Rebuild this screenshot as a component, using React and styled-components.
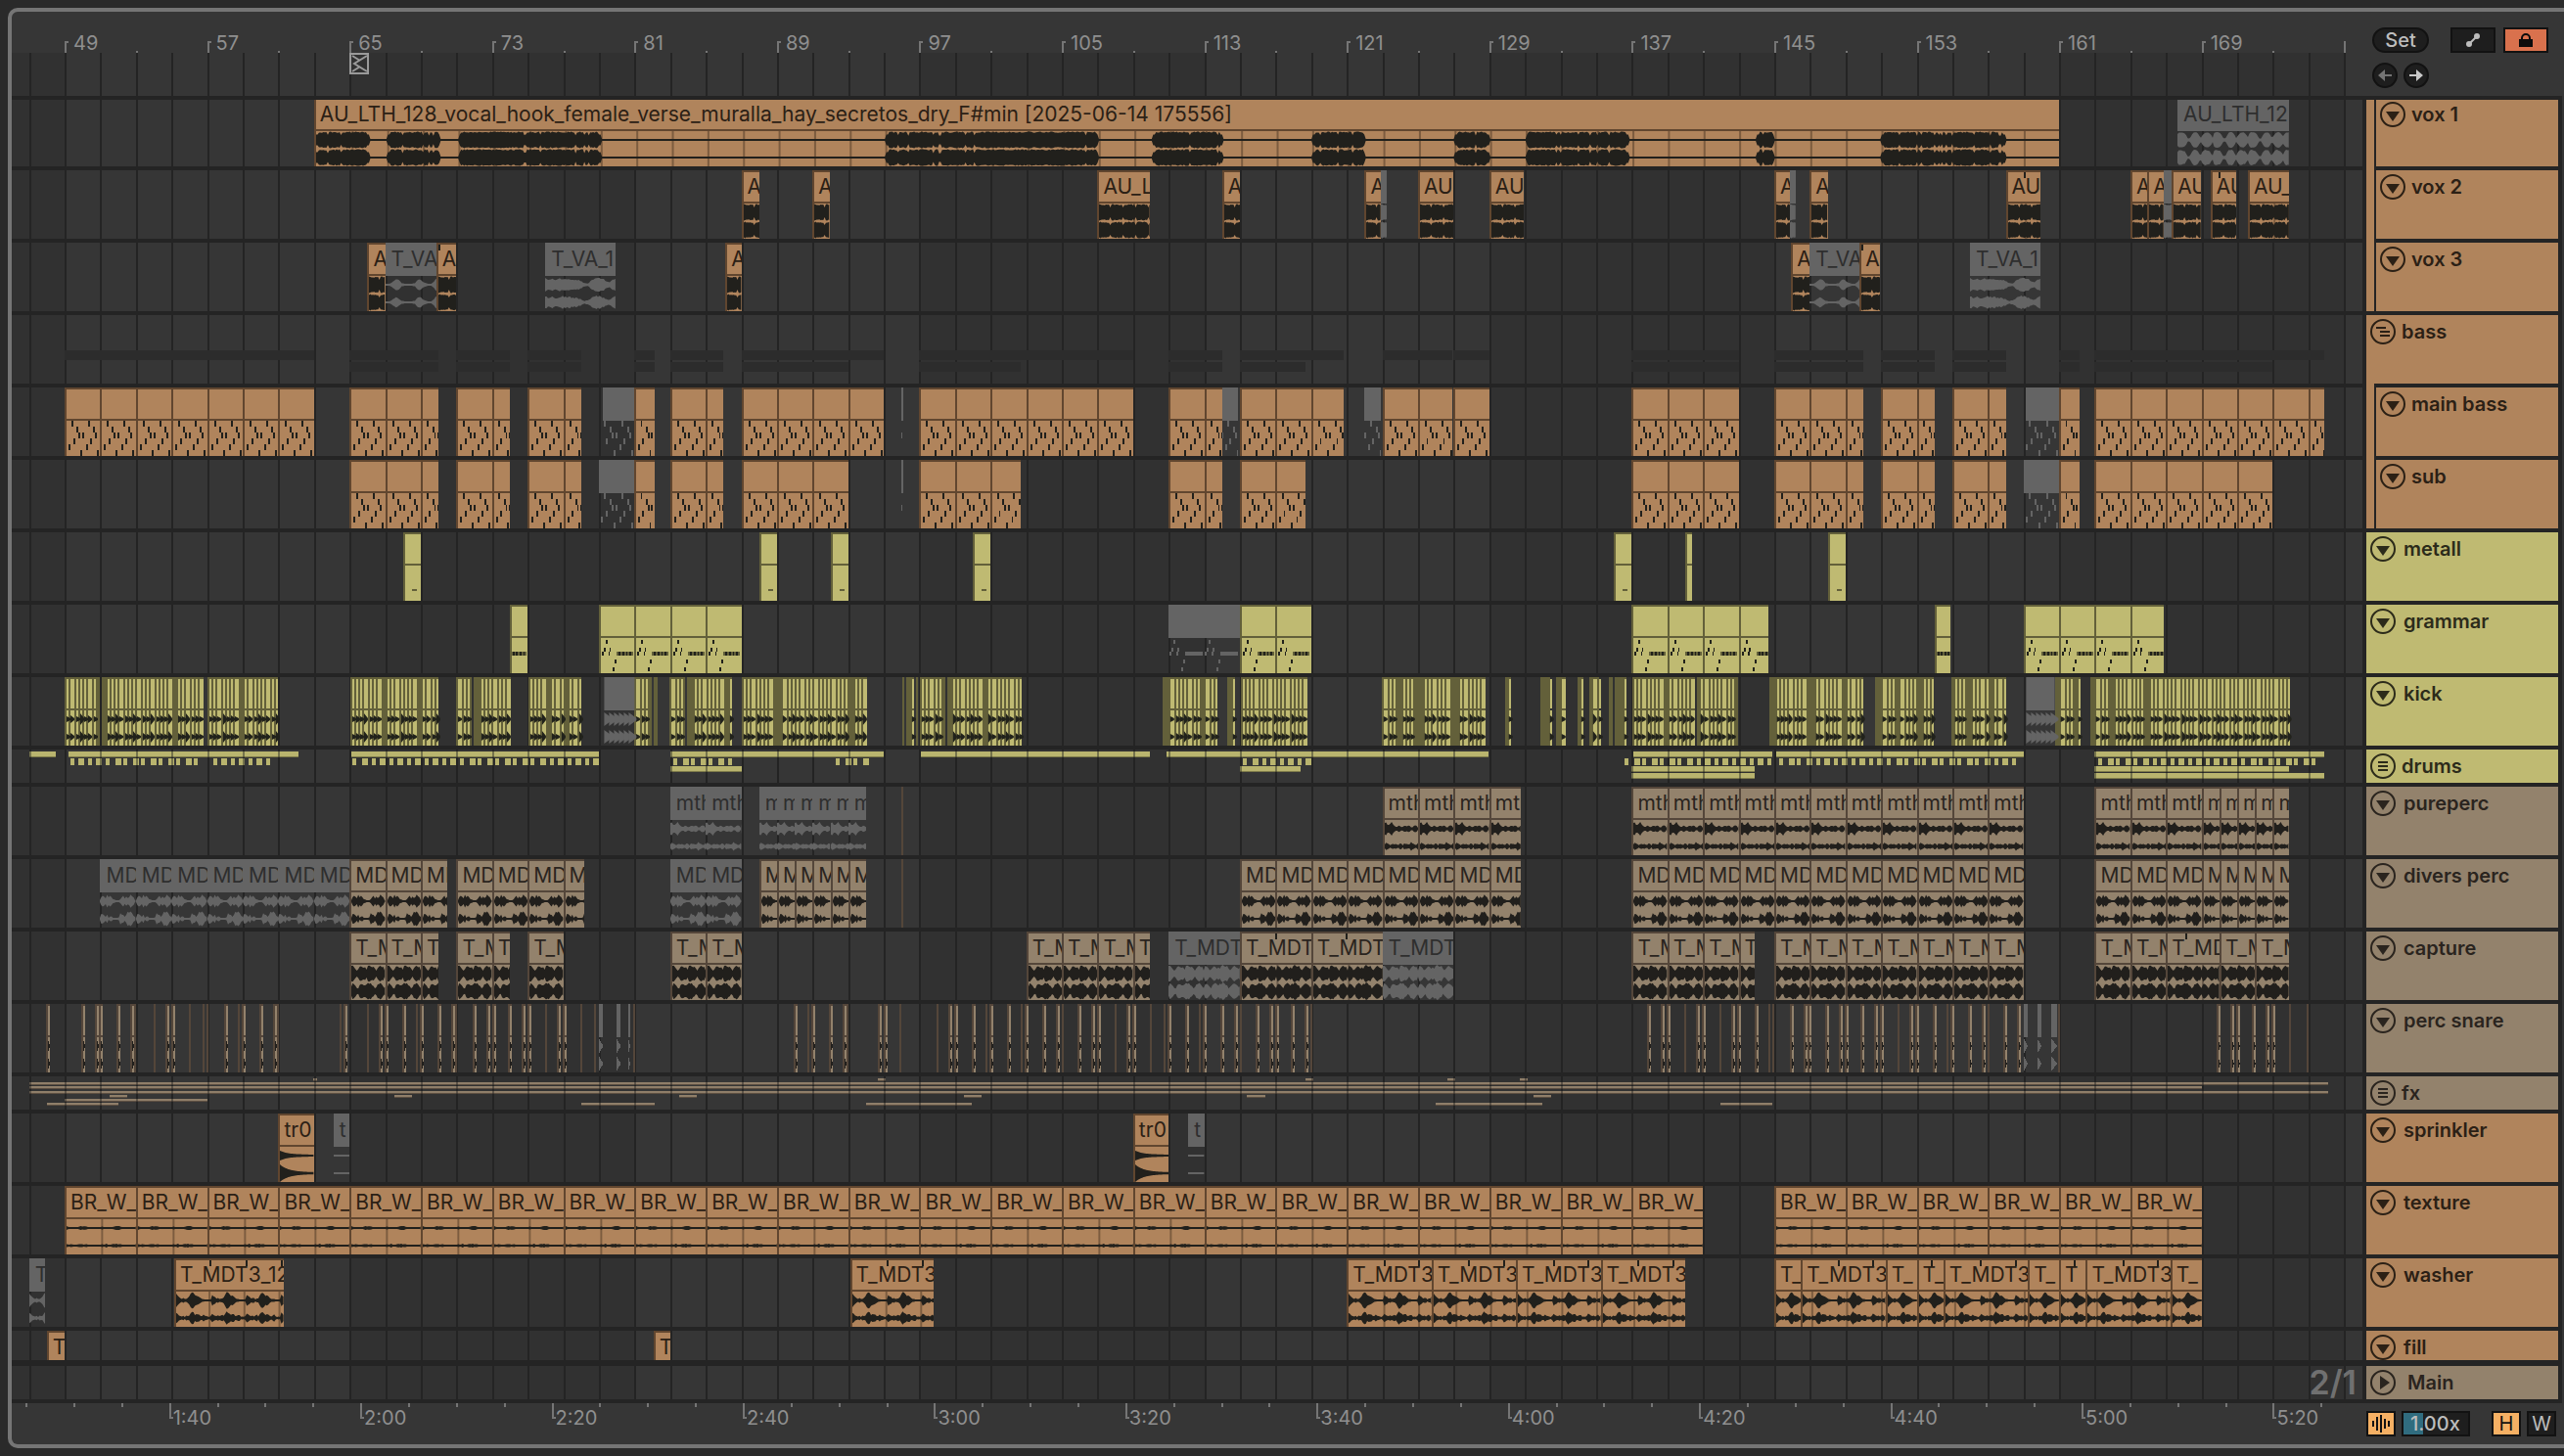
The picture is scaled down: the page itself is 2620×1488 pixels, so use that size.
import React, { useState } from 'react';
import styled, { createGlobalStyle, css } from 'styled-components';

const GlobalStyle = createGlobalStyle`
  * { box-sizing: border-box; }
  body {
    margin: 0;
    background: #2a2a2a;
    font-family: Inter, "Liberation Sans", sans-serif;
    font-size: 20px;
    line-height: 26px;
  }
  button, input { font: inherit; padding: 0; }
`;

// timeline scale: the view shows 132 bars, starting just after bar 46
const VIEW_START = 46.03;
const VIEW_BARS = 132;
const BAR = 18.2; // drawing units per bar inside the svgs
const pct = (bars) => `${(bars / VIEW_BARS) * 100}%`;
const at = (bar) => pct(bar - VIEW_START);
const ux = (bar) => (bar - VIEW_START) * BAR;
const snap = (x) => Math.round(x / 2) * 2;

const palette = {
  orange: { fill: '#b0845c', edge: '#61462f', ink: '#21201c', text: '#2b2015' },
  yellow: { fill: '#bfba72', edge: '#63603a', ink: '#21221b', text: '#2c2b1a' },
  taupe: { fill: '#93826c', edge: '#54463a', ink: '#211f1c', text: '#2a241e' },
  off: { fill: '#646464', edge: '#646464', ink: '#646464', text: '#2e2e2e' },
};

/* ---------- layout ---------- */

const Page = styled.div`
  padding: 8px 0 8px 8px;
`;

const Frame = styled.div`
  border: 4px solid #757575;
  border-right: none;
  border-radius: 10px 0 0 10px;
  background: #363636;
  overflow: hidden;
`;

const SplitRow = styled.div`
  display: grid;
  grid-template-columns: minmax(0, 1fr) 206px;
`;

// a line every two bars, a darker band for every other sixteen
const grid = css`
  background-image:
    repeating-linear-gradient(90deg, #242424 ${at(47)}, #242424 calc(${at(47)} + 2px),
      transparent calc(${at(47)} + 2px), transparent ${at(49)}),
    repeating-linear-gradient(90deg, transparent ${at(49)}, transparent ${at(65)},
      #313131 ${at(65)}, #313131 ${at(81)});
`;

const BeatRuler = styled.div`
  position: relative;
  height: 42px;
`;

const ScrubArea = styled.div`
  position: relative;
  height: 44px;
  ${grid}
`;

const TimeRuler = styled.div`
  position: relative;
  height: 42px;
`;

const Tick = styled.div`
  position: absolute;
  width: ${(p) => (p.$flag ? 4 : 2)}px;
  height: ${(p) => p.$h}px;
  border: 0 solid #757575;
  border-left-width: 2px;
  ${(p) => (p.$low ? 'top: 0;' : 'bottom: 0;')}
  ${(p) => p.$flag && (p.$low ? 'border-bottom-width: 2px;' : 'border-top-width: 2px;')}
`;

const RulerLabel = styled.span`
  position: absolute;
  ${(p) => (p.$low ? 'top: 2px; margin-left: 4px;' : 'top: 19px; margin-left: 9px;')}
  color: #8f8f8f;
`;

const Marker = styled.svg`
  position: absolute;
  top: 0;
`;

const Controls = styled.div`
  display: flex;
  flex-direction: column;
  gap: 10px;
  padding: 16px 16px 0 10px;
`;

const ControlRow = styled.div`
  display: flex;
  gap: ${(p) => p.$gap || 8}px;
`;

const Push = styled.div`
  margin-left: auto;
  display: flex;
  gap: ${(p) => p.$gap}px;
`;

const Pill = styled.button`
  display: flex;
  align-items: center;
  justify-content: center;
  width: ${(p) => p.$w}px;
  height: 26px;
  border: 2px solid #121212;
  border-radius: 13px;
  background: #1e1e1e;
  color: #bdbdbd;
  font-weight: 500;
`;

const Square = styled.button`
  display: flex;
  align-items: center;
  justify-content: center;
  width: ${(p) => p.$w}px;
  height: 26px;
  border: 2px solid #121212;
  background: ${(p) => p.$bg || '#1e1e1e'};
  color: ${(p) => (p.$bg ? '#121212' : '#bdbdbd')};

  svg { flex: none; }
`;

const SpeedInput = styled.input`
  width: 70px;
  height: 26px;
  padding-left: 7px;
  border: 2px solid #121212;
  background: linear-gradient(90deg, #306c7f 20px, #1e1e1e 20px);
  color: #bdbdbd;
  font-weight: 500;
  outline: none;
`;

const FooterControls = styled.div`
  display: flex;
  gap: 6px;
  padding: 8px 8px 0 4px;
`;

const Tracks = styled.div`
  display: flex;
  flex-direction: column;
  padding: 4px 4px 4px 0;
  background: #242424;
  border-right: 2px solid #343434;
`;

const TrackRow = styled.div`
  display: grid;
  grid-template-columns: minmax(0, 1fr) 196px;
  column-gap: 4px;
  height: ${(p) => p.$h}px;
  margin-bottom: ${(p) => p.$gap}px;
`;

const Lane = styled.div`
  position: relative;
  overflow: hidden;
  background-color: #363636;
  ${grid}
`;

const HeaderCell = styled.div`
  display: flex;
  gap: 2px;
  position: relative;
  min-height: 0;
`;

const Strip = styled.div`
  width: 8px;
  margin-bottom: ${(p) => (p.$open ? -4 : 0)}px;
  background: ${(p) => p.$color};
`;

const HeaderBody = styled.div`
  flex: 1;
  display: flex;
  align-items: flex-start;
  gap: ${(p) => p.$gap}px;
  padding: ${(p) => (p.$cut ? 2 : 4)}px 4px 0;
  background: ${(p) => p.$color};
  color: ${(p) => p.$text};
  font-weight: 600;
  white-space: nowrap;

  /* joins an open group with the strip of its first child */
  &::after {
    content: '';
    display: ${(p) => (p.$join ? 'block' : 'none')};
    position: absolute;
    left: 0;
    bottom: -4px;
    width: 8px;
    height: 4px;
    background: inherit;
  }
`;

const FoldButton = styled.button`
  display: block;
  flex: none;
  width: 26px;
  height: 26px;
  border: none;
  background: none;
  color: inherit;

  svg { display: block; }
`;

const ClipBox = styled.div`
  position: absolute;
  top: ${(p) => (p.$cut ? -2 : 0)}px;
  height: ${(p) => p.$h}px;
  overflow: hidden;
  display: flex;
  flex-direction: column;
  background: ${(p) => (p.$off ? 'transparent' : p.$c.fill)};
  border: 0 solid ${(p) => p.$c.edge};
  border-width: ${(p) => (p.$off ? '0' : '2px 0 0 2px')};
`;

const ClipTitle = styled.div`
  flex: none;
  position: relative;
  height: ${(p) => (p.$off ? 34 : 32)}px;
  padding: ${(p) => (p.$off ? '4px 0 0 6px' : '2px 0 0 4px')};
  overflow: hidden;
  white-space: nowrap;
  font-size: 21px;
  color: ${(p) => p.$c.text};
  background: ${(p) => p.$c.fill};
  border-bottom: 2px solid ${(p) => p.$c.edge};
`;

const WarpMark = styled.i`
  position: absolute;
  top: 0;
  width: 2px;
  height: 6px;
  background: #21201c;
`;

const ClipWave = styled.svg`
  display: block;
  width: 100%;
  height: 36px;
`;

const LaneDrawing = styled.svg`
  position: absolute;
  inset: 0;
  width: 100%;
  height: 100%;
`;

const ZoomNote = styled.div`
  position: absolute;
  right: 6px;
  top: 0;
  font-size: 34px;
  line-height: 34px;
  font-weight: 600;
  color: #707070;
`;

/* ---------- wave shapes ---------- */

const rnd = (i, ch) => {
  const v = Math.sin(i * 127.1 + ch * 311.7) * 43758.5453;
  return v - Math.floor(v);
};

// envelopes over two bars, one list for each channel
const envelopes = {
  divers: [
    [1, 6, 8, 4, 8, 5, 7, 3, 2, 1, 1, 1, 6, 7, 4, 7, 4, 8, 6, 4, 1],
    [1, 6, 7, 3, 6, 3, 5, 4, 2, 1, 1, 5, 7, 5, 2, 7, 8, 8, 7, 5, 2],
  ],
  capture: [
    [8, 9, 7, 4, 5, 8, 8, 6, 7, 5, 9, 9, 8, 8, 6, 4, 8, 9, 7, 7, 4],
    [6, 9, 8, 5, 3, 8, 9, 8, 7, 8, 9, 9, 8, 6, 3, 6, 8, 9, 8, 6, 3],
  ],
  pure: [
    [6, 7, 4, 6, 8, 5, 3, 2, 3, 4, 2, 3, 5, 3, 4, 4, 2, 3, 4, 3, 2],
    [3, 4, 4, 2, 3, 4, 3, 4, 2, 4, 3, 2, 4, 3, 2, 4, 5, 3, 2, 3, 4],
  ],
  washer: [
    [7, 5, 4, 2, 3, 2, 2, 3, 6, 9, 8, 5, 6, 4, 3, 2, 2, 1, 1, 1, 2],
    [6, 4, 3, 2, 3, 2, 4, 2, 5, 7, 6, 3, 5, 4, 2, 3, 4, 2, 2, 1, 3],
  ],
  texture: [
    [2, 1, 1, 1, 1, 1, 1, 1, 2, 2, 2, 2, 1, 1, 1, 1, 1, 1, 1, 1, 1],
    [2, 1, 1, 2, 1, 1, 1, 2, 2, 2, 1, 2, 1, 1, 1, 1, 1, 1, 1, 1, 1],
  ],
  blobs: [
    [6, 8, 8, 8, 7, 5, 1, 2, 5, 8, 8, 8, 6, 2, 5, 7, 8, 8, 7, 5, 2],
    [6, 8, 8, 7, 7, 4, 1, 2, 6, 8, 8, 8, 5, 2, 6, 8, 8, 7, 7, 4, 2],
  ],
  va: [
    [1, 1, 2, 4, 6, 5, 2, 1, 1, 1, 1, 2, 5, 6, 3, 2, 1, 1, 3, 7, 3],
    [1, 1, 2, 4, 6, 4, 2, 1, 1, 1, 1, 2, 5, 6, 3, 2, 1, 1, 3, 7, 3],
  ],
  vaLong: [
    [7, 6, 7, 5, 7, 6, 7, 6, 6, 5, 5, 2, 2, 5, 7, 7, 7, 5, 3, 6, 7],
    [7, 5, 7, 5, 6, 7, 6, 6, 5, 5, 4, 2, 2, 5, 7, 7, 6, 4, 3, 6, 7],
  ],
};
const periods = { va: 3, vaLong: 4 };
const roughness = { divers: 2.4, capture: 1.6, pure: 1.4, washer: 1, vaLong: 1.4 };

const fromEnvelope = (list, bar, period) => {
  const pos = ((bar % period) / period) * (list.length - 1);
  const i = Math.floor(pos);
  const next = list[Math.min(i + 1, list.length - 1)];
  return list[i] + (next - list[i]) * (pos - i);
};

const speech = (i, ch) => 8.6 - rnd(i, ch) * 1.4 - (rnd(i + 7, 0) > 0.92 ? 3 : 0);

const VOX_PHRASES = [[63, 66], [67, 70], [71, 79], [95, 107], [110, 114], [119, 122],
  [127, 129], [131, 136.8], [144, 145], [151, 158]];

const amplitude = (shape, bar, i, ch, start) => {
  if (shape === 'phrases') {
    const b = bar + start;
    const hit = VOX_PHRASES.find(([a, z]) => b >= a && b <= z);
    if (!hit) return 1;
    const edge = Math.min(b - hit[0], hit[1] - b);
    return edge < 0.15 ? 5.5 : speech(i, ch);
  }
  if (shape === 'speech') return i % 9 === 8 ? 5 : speech(i, ch);
  if (shape === 'decay') return ch ? 1 + 8 * Math.exp(-bar * 1.9) : 1 + 4 * Math.exp(-bar * 1.9);
  if (shape === 'flat') return 1;
  const base = fromEnvelope(envelopes[shape][ch], bar, periods[shape] || 2);
  if (base < 1.5) return base;
  return base - rnd(i, ch) * (roughness[shape] || 0.5);
};

const wavePath = (shape, len, ch, start) => {
  const cy = ch ? 27 : 9;
  const n = Math.ceil((len * BAR) / 1.5);
  const up = [];
  const down = [];
  for (let i = 0; i <= n; i += 1) {
    const x = Math.min(i * 1.5, len * BAR);
    const a = Math.max(1, amplitude(shape, x / BAR, i, ch, start));
    up.push(`${x.toFixed(1)} ${(cy - a).toFixed(1)}`);
    down.unshift(`${x.toFixed(1)} ${(cy + a).toFixed(1)}`);
  }
  return `M${up.join('L')}L${down.join('L')}Z`;
};

// [x, row] of every note in a two bar loop
const BASS_NOTES = [[5, 0], [23, 0], [11, 1], [29, 1], [13, 2], [17, 2], [31, 2],
  [7, 3], [25, 3], [2, 4], [21, 4], [15, 5], [33, 5]];
const GRAMMAR_NOTES = [[5, 2], [3, 10], [9, 10], [1, 14], [8, 14], [15, 22], [13, 30]];

const Notes = ({ kind, start, len, color, dim }) => {
  if (kind === 'metall') return <rect x="8" y="24" width="6" height="2" fill={dim} />;
  const out = [];
  const first = Math.floor((start - 1) / 2) * 2 + 1;
  for (let b = first; b < start + len; b += 2) {
    const x0 = Math.round((b - start) * BAR);
    if (kind === 'bass') {
      BASS_NOTES.forEach(([x, r]) => out.push(
        <rect key={`${b}-${x}-${r}`} x={x0 + x} y={r * 6} width="2" height="6" fill={color} />));
    } else {
      GRAMMAR_NOTES.forEach(([x, y]) => out.push(
        <rect key={`${b}-${x}-${y}`} x={x0 + x} y={y} width="2" height="4" fill={color} />));
      for (let x = 17; x < 34; x += 2) {
        out.push(<rect key={`${b}-r${x}`} x={x0 + x} y="14" width="2" height="4" fill={x % 4 === 1 ? dim : color} />);
      }
    }
  }
  return out;
};

const Clip = ({ clip, track }) => {
  const [start, end, label, opts = {}] = clip;
  const off = Boolean(opts.off);
  const c = off ? palette.off : palette[track.color];
  const len = end - start;
  const shape = opts.shape || track.shape;
  const lines = [];
  if (!off) {
    for (let b = Math.floor(start) + 1; b < end; b += 1) {
      if (b % 2 === 1) lines.push(b);
    }
  }
  return (
    <ClipBox $c={c} $off={off} $cut={track.cut} $h={track.cut ? 70 : track.h}
      style={{ left: at(start), width: pct(len) }}>
      <ClipTitle $c={c} $off={off}>
        {label}
        {(opts.marks || []).map((m) => <WarpMark key={m} style={{ left: `${(m / len) * 100}%` }} />)}
      </ClipTitle>
      {track.h > 40 && (
        <ClipWave viewBox={`0 0 ${len * BAR} 36`} preserveAspectRatio="none" aria-hidden="true">
          {track.notes
            ? <g shapeRendering="crispEdges"><Notes kind={track.notes} start={start} len={len} color={c.ink} dim={c.edge} /></g>
            : (
              <>
                {lines.map((b) => <rect key={b} x={(b - start) * BAR} y="0" width="2" height="36" fill={c.edge} opacity="0.65" />)}
                <path d={wavePath(shape, len, 0, start)} fill={c.ink} />
                <path d={wavePath(shape, len, 1, start)} fill={c.ink} />
              </>
            )}
        </ClipWave>
      )}
    </ClipBox>
  );
};

/* ---------- lanes drawn as a whole ---------- */

const KICKS = [[49, 50.98], [51.1, 56.77], [57, 61], [65, 70], [71, 71.9], [72, 74], [75, 78],
  [81, 82], [82.1, 82.25], [83, 83.8], [83.9, 86.43], [87, 94], [96, 96.1], [96.3, 96.65], [96.75, 96.88],
  [97, 98.42], [98.52, 102.7], [110.7, 113.7], [114.25, 114.66], [115, 118.75], [122.93, 128.74],
  [129.85, 130.16], [131.8, 132.4], [132.7, 133.25], [133.9, 134.25], [134.55, 135.1], [135.65, 135.88],
  [136, 136.65], [137, 140.5], [140.6, 142.9], [144.7, 149.95], [150.7, 153.9], [154.9, 158],
  [160.75, 162.16], [162.7, 173.9]];
const KICK_RESTS = [[50.75, 51.1], [54.8, 55.1], [56.55, 57], [58.75, 59.05], [66.75, 67.05], [68.75, 69.05],
  [71.7, 72.1], [75.8, 76.1], [77, 77.3], [81.75, 82.15], [83.7, 84.1], [85.8, 86.1], [88.75, 89.1],
  [92.9, 93.1], [96, 96.5], [96.7, 97], [98.2, 98.6], [100.5, 100.8], [102.3, 102.57], [110.7, 110.85],
  [112.7, 113], [114.25, 114.55], [116.8, 117.05], [123.7, 124], [124.65, 125.1], [126.7, 127.1],
  [129.85, 130.05], [131.8, 132.13], [132.7, 133], [133.9, 134], [134.55, 134.67], [135.65, 136.5],
  [138.75, 139.05], [140.4, 140.8], [142.7, 142.9], [144.7, 145], [146.65, 147.1], [148.7, 149.05],
  [150.7, 151.05], [151.7, 152], [152.9, 153.25], [155.7, 156], [157, 157.3], [160.75, 161], [161.7, 162.05],
  [162.7, 163], [163.7, 164.05], [165.7, 166]];

const spike = (x, w, a, cy) => `M${x} ${cy - a}L${x + w} ${cy - 1}V${cy + 1}L${x} ${cy + a}Z`;

const KickLane = () => {
  const { fill, edge, ink } = palette.yellow;
  const beats = [];
  KICKS.forEach(([a, z]) => {
    for (let b = Math.ceil(a * 4) / 4; b < z; b += 0.25) {
      if (!KICK_RESTS.some(([r0, r1]) => b >= r0 - 0.03 && b < r1 - 0.08)) beats.push([b, Math.min(b + 0.25, z)]);
    }
  });
  return (
    <LaneDrawing viewBox={`0 0 ${VIEW_BARS * BAR} 70`} preserveAspectRatio="none" aria-hidden="true">
      <g shapeRendering="crispEdges">
        {KICKS.map(([a, z]) => <rect key={a} x={snap(ux(a))} y="0" width={snap(ux(z)) - snap(ux(a))} height="70" fill={edge} />)}
        {beats.map(([a, z]) => {
          const x = snap(ux(a)) + 2;
          const w = Math.max(2, snap(ux(z)) - x);
          return (
            <g key={a} fill={fill}>
              <rect x={x} y="2" width={w} height="30" />
              <rect x={x} y="34" width={w} height="36" />
            </g>
          );
        })}
      </g>
      {beats.map(([a]) => {
        const x = snap(ux(a)) + 2;
        const amp = (a * 4) % 4 === 3 ? 6 : 3 + ((a * 4) % 2);
        return <path key={a} d={spike(x, 4, amp, 43) + spike(x, 4, amp, 61)} fill={ink} />;
      })}
      {[[79.3, 81], [159.15, 160.75]].map(([a, z]) => (
        <g key={a} fill="#646464">
          <rect x={ux(a)} y="0" width={(z - a) * BAR} height="34" />
          {[0, 1, 2, 3, 4, 5].map((i) => (
            <path key={i} d={spike(ux(a) + i * 5, 8, 7, 43) + spike(ux(a) + i * 5, 8, 7, 61)} />
          ))}
        </g>
      ))}
    </LaneDrawing>
  );
};

const SNARES = [48.14, 50.12, 50.88, 51.1, 52.09, 52.87, 54.86, 55.18, 58.12, 59.12, 60.11, 60.89, 64.86, 66.83,
  67.15, 68.13, 69.11, 70.11, 70.87, 72.08, 72.86, 73.18, 74.06, 74.85, 75.14, 76.83, 77.15, 90.13, 91.11,
  92.09, 92.85, 94.84, 95.16, 98.79, 99.13, 100.09, 101.12, 102.08, 103.06, 104.06, 104.82, 106.05, 106.84,
  107.1, 108.8, 109.12, 111.1, 112.08, 113.07, 114.07, 114.83, 116.03, 116.82, 117.14, 118.02, 118.78,
  138.04, 138.8, 139.07, 140.76, 141.08, 142.75, 143.07, 144.05, 146.03, 146.82, 147.04, 147.97, 148.78,
  149.13, 149.98, 150.74, 151.09, 152.76, 153.05, 154.08, 155.04, 156.02, 156.8, 158.03, 158.8, 170, 170.78,
  171.03, 171.97, 172.75, 173.08];
const SNARE_CUTS = [53, 54.07, 56.06, 56.82, 57.04, 58.8, 61, 64.52, 66.04, 68.81, 71, 76.05, 78.04, 78.8, 81,
  90.8, 93, 95.95, 98.03, 100.8, 102.76, 105.05, 108, 110, 110.8, 112.75, 115.08, 119.02, 140, 141.96,
  144.73, 144.93, 151.97, 154.72, 157.05, 161, 173.96, 174.94];
const SNARES_OFF = [[79.07, 4], [80.05, 4], [80.78, 2], [159.07, 4], [159.93, 4], [160.7, 6]];

const SnareLane = () => {
  const { fill, edge, ink } = palette.taupe;
  return (
    <LaneDrawing viewBox={`0 0 ${VIEW_BARS * BAR} 70`} preserveAspectRatio="none" shapeRendering="crispEdges" aria-hidden="true">
      {SNARE_CUTS.map((b) => <rect key={b} x={snap(ux(b)) - 1} y="0" width="2" height="70" fill={edge} />)}
      {SNARES.map((b) => {
        const x = snap(ux(b));
        return (
          <g key={b}>
            <rect x={x - 3} y="0" width="4" height="70" fill={edge} />
            <rect x={x - 1} y="2" width="2" height="30" fill={fill} />
            <rect x={x - 1} y="34" width="2" height="36" fill={fill} />
            <path d={spike(x - 1, 2, 6, 43) + spike(x - 1, 2, 7, 61)} fill={ink} />
          </g>
        );
      })}
      {SNARES_OFF.map(([b, w]) => (
        <g key={b} fill="#646464">
          <rect x={snap(ux(b)) - 2} y="0" width={w} height="34" />
          <path d={spike(snap(ux(b)) - 2, w, 8, 43) + spike(snap(ux(b)) - 2, w, 8, 61)} />
        </g>
      ))}
    </LaneDrawing>
  );
};

// small overview of what a folded group holds: [top, from, to]
const Overview = ({ h, bars, thick, fill, edge, dashes = [] }) => (
  <LaneDrawing viewBox={`0 0 ${VIEW_BARS * BAR} ${h}`} preserveAspectRatio="none" shapeRendering="crispEdges" aria-hidden="true">
    {bars.map(([y, a, z]) => (
      <g key={`${y}-${a}`}>
        <rect x={ux(a)} y={y} width={(z - a) * BAR} height={thick} fill={fill} />
        {edge && <rect x={ux(a)} y={y + thick - 1} width={(z - a) * BAR} height="1" fill={edge} />}
      </g>
    ))}
    {dashes.map(([a, z]) => Array.from({ length: Math.round((z - a) * 2) }, (_, i) => (
      <rect key={`${a}-${i}`} x={snap(ux(a + i / 2))} y="9" width={i % 2 ? 6 : 4} height="7" fill={fill} />
    )))}
    {edge && Array.from({ length: VIEW_BARS / 2 }, (_, i) => (
      <rect key={i} x={ux(47 + i * 2)} y="0" width="2" height={h} fill="#242424" opacity="0.45" />
    ))}
  </LaneDrawing>
);

const DRUM_BARS = [[2, 47, 48.5], [2, 49.2, 62.15], [2, 65.1, 79], [2, 83, 95], [2, 97.1, 109.95],
  [2, 110.85, 128.96], [2, 137.07, 144.9], [2, 145.1, 159], [2, 163, 175.9], [17, 83, 87], [17, 115, 118.4],
  [17, 137, 143.9], [17, 163, 173.9], [24, 137, 143.9], [24, 163, 175.9]];
const DRUM_DASHES = [[49.3, 56.7], [57.3, 61], [65.2, 79], [83.2, 86.6], [92.3, 94.2], [115.2, 119],
  [136.6, 144.9], [145.3, 159], [163.2, 175.9]];
const FX_BARS = [[2, 62.95, 63.2], [2, 94.67, 95.1], [2, 118.7, 119.1], [2, 126.66, 127.1], [2, 130.73, 131.15],
  [6, 47, 176.1], [10, 47, 169], [15, 47, 176.1], [19, 51.5, 52.5], [19, 67.5, 68.5], [19, 83.5, 84.5],
  [19, 99.5, 100.5], [19, 115.4, 116.4], [19, 131.5, 132.5], [23, 49, 57], [27, 48, 52], [27, 78, 82.15],
  [27, 94, 99.95], [27, 126, 132], [27, 142, 144.9]];

/* ---------- song data ---------- */

const OFF = { off: true };

// consecutive clips cut at the given bars
const run = (cuts, label = '', opts) => cuts.slice(1).map((end, i) => [cuts[i], end, label, opts]);
const steps = (from, to, size) => {
  const cuts = [];
  for (let b = from; b < to; b += size) cuts.push(b);
  return [...cuts, to];
};

const bassStart = [steps(65, 70, 2), [71, 73, 74], [75, 77, 78], [81, 82.15], [83, 85, 86]];
const bassEnd = [[137, 139, 141, 143], [145, 147, 149, 150], [151, 153, 154], [155, 157, 158], [161, 162.17]];
const mainBass = [steps(49, 63, 2), ...bassStart, steps(87, 95, 2), steps(97, 109, 2), [111, 113, 114],
  [115, 117, 119, 120.85], [123, 125, 126.9], [127, 129], ...bassEnd, steps(163, 175.9, 2)];
const subBass = [...bassStart, steps(87, 93, 2), steps(97, 102.7, 2), [111, 113, 114], [115, 117, 118.7],
  ...bassEnd, steps(163, 173, 2)];
const span = (y) => (cuts) => [y, cuts[0], cuts[cuts.length - 1]];
const washerLabels = ['T_', 'T_MDT3_', 'T_', 'T_', 'T_MDT3_', 'T_', 'T', 'T_MDT3_', 'T_'];
const washerCuts = [145, 146.5, 151.25, 153, 154.5, 159.25, 161, 162.5, 167.25, 169];
const washerMarks = [[], [2, 4], [], [0.75], [2, 4], [], [0.75], [2, 4], []];

const tracks = [
  {
    name: 'vox 1', color: 'orange', h: 68, cut: true, nested: true, open: true, shape: 'speech',
    clips: [
      [63, 161, 'AU_LTH_128_vocal_hook_female_verse_muralla_hay_secretos_dry_F#min [2025-06-14 175556]', { shape: 'phrases' }],
      [167.65, 173.9, 'AU_LTH_12', { off: true, shape: 'blobs' }],
    ],
  },
  {
    name: 'vox 2', color: 'orange', h: 70, nested: true, open: true, shape: 'speech',
    clips: [
      [87, 88, 'A'], [91, 91.95, 'A'], [107, 109.95, 'AU_L'], [114, 115, 'A'],
      [122, 122.92, 'A'], [122.92, 123.26, '', OFF], [125, 127, 'AU'], [129, 130.95, 'AU'],
      [145, 145.88, 'A'], [145.88, 146.2, '', OFF], [147, 148, 'A'], [158, 159.95, 'AU', { marks: [0.95] }],
      [165, 165.95, 'A'], [165.95, 166.87, 'A'], [166.87, 167.33, '', OFF], [167.33, 168.97, 'AU'],
      [169.5, 170.94, 'AU', { marks: [0.4] }], [171.6, 173.9, 'AU_'],
    ],
  },
  {
    name: 'vox 3', color: 'orange', h: 70, nested: true, shape: 'speech',
    clips: [
      [66, 67, 'A'], [67, 69.87, 'T_VA', { off: true, shape: 'va' }], [69.87, 71, 'AU', { marks: [0.01] }],
      [76, 79.95, 'T_VA_1', { off: true, shape: 'vaLong' }], [86.1, 87, 'A'],
      [145.95, 147, 'A'], [147, 149.8, 'T_VA', { off: true, shape: 'va' }], [149.8, 150.96, 'AU', { marks: [0.01] }],
      [156, 159.95, 'T_VA_1', { off: true, shape: 'vaLong' }],
    ],
  },
  {
    name: 'bass', color: 'orange', h: 70, group: 'open',
    drawing: (
      <Overview h={70} thick={10} fill="#2c2c2c"
        bars={[...mainBass.map(span(36)), ...subBass.map(span(48))]} />
    ),
  },
  {
    name: 'main bass', color: 'orange', h: 70, nested: true, open: true, notes: 'bass',
    clips: [...mainBass.flatMap((c) => run(c)), [79.2, 81, '', OFF], [96, 96.11, '', OFF], [114, 114.9, '', OFF],
      [121.95, 122.92, '', OFF], [159.1, 161, '', OFF]],
  },
  {
    name: 'sub', color: 'orange', h: 70, nested: true, notes: 'bass',
    clips: [...subBass.flatMap((c) => run(c)), [79, 81, '', OFF], [96, 96.11, '', OFF], [159, 161, '', OFF]],
  },
  {
    name: 'metall', color: 'yellow', h: 70, notes: 'metall',
    clips: [[68, 69], [88, 89], [92, 93], [100, 101], [136, 137], [140, 140.4], [148, 149]],
  },
  {
    name: 'grammar', color: 'yellow', h: 70, notes: 'grammar',
    clips: [[74, 75], ...run(steps(79, 87, 2)), [111, 115, '', OFF], ...run([115, 117, 119]),
      ...run([137, 139, 141, 143, 144.7]), [154, 154.9], ...run(steps(159, 166.9, 2))],
  },
  { name: 'kick', color: 'yellow', h: 70, drawing: <KickLane /> },
  {
    name: 'drums', color: 'yellow', h: 34, group: 'closed',
    drawing: <Overview h={34} thick={6} fill="#b9b46e" edge="#7d7a49" bars={DRUM_BARS} dashes={DRUM_DASHES} />,
  },
  {
    name: 'pureperc', color: 'taupe', h: 70, shape: 'pure',
    clips: [...run([83, 85, 87], 'mth', OFF), ...run(steps(88, 94, 1), 'm', OFF), [96, 96.11, ''],
      ...run([123, 125, 127, 129, 130.75], 'mth'), ...run(steps(137, 159, 2), 'mth'),
      ...run([163, 165, 167, 169], 'mth'), ...run([169, 170, 171, 172, 173, 173.9], 'm')],
  },
  {
    name: 'divers perc', color: 'taupe', h: 70, shape: 'divers',
    clips: [...run(steps(51, 65, 2), 'MD', OFF), ...run([65, 67, 69, 70.5], 'MD'),
      ...run([71, 73, 75, 77], 'MD'), [77, 78.2, 'M'], ...run([83, 85, 87], 'MD', OFF), ...run(steps(88, 94, 1), 'M'),
      [96, 96.11, ''], ...run([...steps(115, 129, 2), 130.75], 'MD'), ...run(steps(137, 159, 2), 'MD'),
      ...run([163, 165, 167, 169], 'MD'), ...run([169, 170, 171, 172, 173, 173.9], 'M')],
  },
  {
    name: 'capture', color: 'taupe', h: 70, shape: 'capture',
    clips: [...run([65, 67, 69], 'T_M'), [69, 70, 'T'], [71, 73, 'T_M'], [73, 74, 'T'], [75, 77, 'T_M'],
      ...run([83, 85, 87], 'T_M'), ...run([103, 105, 107, 109], 'T_M'), [109, 109.95, 'T'], [111, 115, 'T_MDT', OFF],
      ...run([115, 119, 123], 'T_MDT', { marks: [1.9] }), [123, 127, 'T_MDT', OFF],
      ...run([137, 139, 141, 143], 'T_M'), [143, 143.9, 'T'], ...run(steps(145, 159, 2), 'T_M'),
      ...run([163, 165, 167], 'T_M'), [167, 170, 'T_MD', { marks: [1] }], ...run([170, 172, 173.9], 'T_M')],
  },
  { name: 'perc snare', color: 'taupe', h: 70, drawing: <SnareLane /> },
  {
    name: 'fx', color: 'taupe', h: 34, group: 'closed',
    drawing: <Overview h={34} thick={3} fill="#8f7e69" edge="#5b4e41" bars={FX_BARS} />,
  },
  {
    name: 'sprinkler', color: 'orange', h: 70, shape: 'decay',
    clips: [[61, 63, 'tr0'], [64.1, 65, 't', { off: true, shape: 'flat' }],
      [109, 111, 'tr0'], [112.1, 113, 't', { off: true, shape: 'flat' }]],
  },
  {
    name: 'texture', color: 'orange', h: 70, shape: 'texture',
    clips: [...run(steps(49, 141, 4), 'BR_W_'), ...run(steps(145, 169, 4), 'BR_W_')],
  },
  {
    name: 'washer', color: 'orange', h: 70, shape: 'washer',
    clips: [[47, 47.9, 'T', OFF], [55.15, 61.28, 'T_MDT3_12', { marks: [1.9, 4, 6] }],
      [93.1, 97.8, 'T_MDT3_', { marks: [2, 4] }], ...run([121, 125.75, 130.5, 135.25, 140], 'T_MDT3_', { marks: [2, 4] }),
      ...washerCuts.slice(0, -1).map((b, i) => [b, washerCuts[i + 1], washerLabels[i], { marks: washerMarks[i] }])],
  },
  { name: 'fill', color: 'orange', h: 30, gap: 6, clips: [[48, 49, 'T'], [82.06, 83, 'T']] },
  { name: 'Main', color: 'taupe', h: 34, gap: 0, main: true },
];

/* ---------- icons ---------- */

const FoldIcon = ({ kind }) => (
  <svg width="26" height="26" viewBox="0 0 26 26" aria-hidden="true">
    <circle cx="13" cy="13" r="12" fill="none" stroke="currentColor" strokeWidth="2" />
    {kind === 'down' && <path d="M6 10h14l-7 10z" fill="currentColor" />}
    {kind === 'right' && <path d="M10 6v14l10-7z" fill="currentColor" />}
    {kind === 'closed' && <path d="M8 8h10v2H8zM8 12h10v2H8zM8 16h10v2H8z" fill="currentColor" />}
    {kind === 'open' && <path d="M6 8h10v2H6zM10 12h10v2H10zM10 16h10v2H10z" fill="currentColor" />}
  </svg>
);

const ArrowIcon = ({ left }) => (
  <svg width="22" height="22" viewBox="0 0 22 22" aria-hidden="true">
    {left
      ? <path d="M4 11l7-6v5h7v2h-7v5z" fill="#747474" />
      : <path d="M18 11l-7-6v5H4v2h7v5z" fill="#c8c8c8" />}
  </svg>
);

const AutomationIcon = () => (
  <svg width="42" height="22" viewBox="0 0 42 22" aria-hidden="true">
    <path d="M17 15l8-8" stroke="#bdbdbd" strokeWidth="2" />
    <circle cx="17" cy="15" r="3" fill="#bdbdbd" />
    <circle cx="25" cy="7" r="3" fill="#bdbdbd" />
  </svg>
);

const LockIcon = () => (
  <svg width="42" height="22" viewBox="0 0 42 22" aria-hidden="true">
    <path d="M14 10h14v8H14z" fill="#0c0c0c" />
    <path d="M17 10V9a4 4 0 0 1 8 0v1" fill="none" stroke="#0c0c0c" strokeWidth="2" />
  </svg>
);

const WaveIcon = () => (
  <svg width="26" height="22" viewBox="0 0 26 22" aria-hidden="true">
    <path d="M4 8h2v6H4zM8 4h2v14H8zM12 2h2v18h-2zM16 6h2v10h-2zM20 8h2v6h-2z" fill="#121212" />
  </svg>
);

/* ---------- page ---------- */

const range = (from, to, step) => Array.from({ length: Math.floor((to - from) / step) + 1 }, (_, i) => from + i * step);
const secondsAt = (t) => pct(8.83 + (t - 100) * 0.537);

const Track = ({ track }) => {
  const c = palette[track.color];
  const kind = track.group || (track.main ? 'right' : 'down');
  const spacing = track.main ? 12 : track.group || track.nested ? 6 : 8;
  return (
    <TrackRow $h={track.h} $gap={track.gap ?? 4}>
      <Lane>
        {track.drawing}
        {(track.clips || []).map((clip) => <Clip key={clip[0]} clip={clip} track={track} />)}
        {track.main && <ZoomNote>2/1</ZoomNote>}
      </Lane>
      <HeaderCell>
        {track.nested && <Strip $color={c.fill} $open={track.open} />}
        <HeaderBody $color={c.fill} $text={c.text} $gap={spacing} $cut={track.cut} $join={track.group === 'open'}>
          <FoldButton aria-label={`Fold ${track.name}`}><FoldIcon kind={kind} /></FoldButton>
          <span>{track.name}</span>
        </HeaderBody>
      </HeaderCell>
    </TrackRow>
  );
};

const App = () => {
  const [speed, setSpeed] = useState('1.00x');

  return (
    <Page>
      <GlobalStyle />
      <Frame>
        <SplitRow>
          <div>
            <BeatRuler>
              {range(49, 177, 4).map((b) => {
                const major = b % 8 === 1;
                return <Tick key={b} $h={major ? 12 : 2} $flag={major && b < 177} style={{ left: at(b) }} />;
              })}
              {range(49, 169, 8).map((b) => <RulerLabel key={b} style={{ left: at(b) }}>{b}</RulerLabel>)}
            </BeatRuler>
            <ScrubArea>
              <Marker width="20" height="22" viewBox="0 0 20 22" style={{ left: at(65) }} aria-hidden="true">
                <path d="M1 1h18v20H1z" fill="none" stroke="#9a9a9a" strokeWidth="2" />
                <path d="M18 3L5 11l13 8M3 3l8 5M3 19l8-5" fill="none" stroke="#9a9a9a" strokeWidth="2" />
              </Marker>
            </ScrubArea>
          </div>
          <Controls>
            <ControlRow>
              <Pill $w={58}>Set</Pill>
              <Push $gap={8}>
                <Square $w={46} aria-label="Automation mode"><AutomationIcon /></Square>
                <Square $w={46} $bg="#d9714d" aria-label="Lock envelopes"><LockIcon /></Square>
              </Push>
            </ControlRow>
            <ControlRow $gap={6}>
              <Pill $w={26} aria-label="Previous locator"><ArrowIcon left /></Pill>
              <Pill $w={26} aria-label="Next locator"><ArrowIcon /></Pill>
            </ControlRow>
          </Controls>
        </SplitRow>
        <Tracks>
          {tracks.map((t) => <Track key={t.name} track={t} />)}
        </Tracks>
        <SplitRow>
          <TimeRuler>
            {range(85, 325, 5).map((t) => {
              const major = t % 20 === 0;
              return <Tick key={t} $low $h={major ? 16 : 4} $flag={major} style={{ left: secondsAt(t) }} />;
            })}
            {range(100, 320, 20).map((t) => (
              <RulerLabel key={t} $low style={{ left: secondsAt(t) }}>
                {`${Math.floor(t / 60)}:${String(t % 60).padStart(2, '0')}`}
              </RulerLabel>
            ))}
          </TimeRuler>
          <FooterControls>
            <Square $w={30} $bg="#f5b064" aria-label="Show waveforms"><WaveIcon /></Square>
            <SpeedInput aria-label="Speed" value={speed} onChange={(e) => setSpeed(e.target.value)} />
            <Push $gap={6}>
              <Square $w={30} $bg="#f5b064">H</Square>
              <Square $w={30}>W</Square>
            </Push>
          </FooterControls>
        </SplitRow>
      </Frame>
    </Page>
  );
};

export default App;
